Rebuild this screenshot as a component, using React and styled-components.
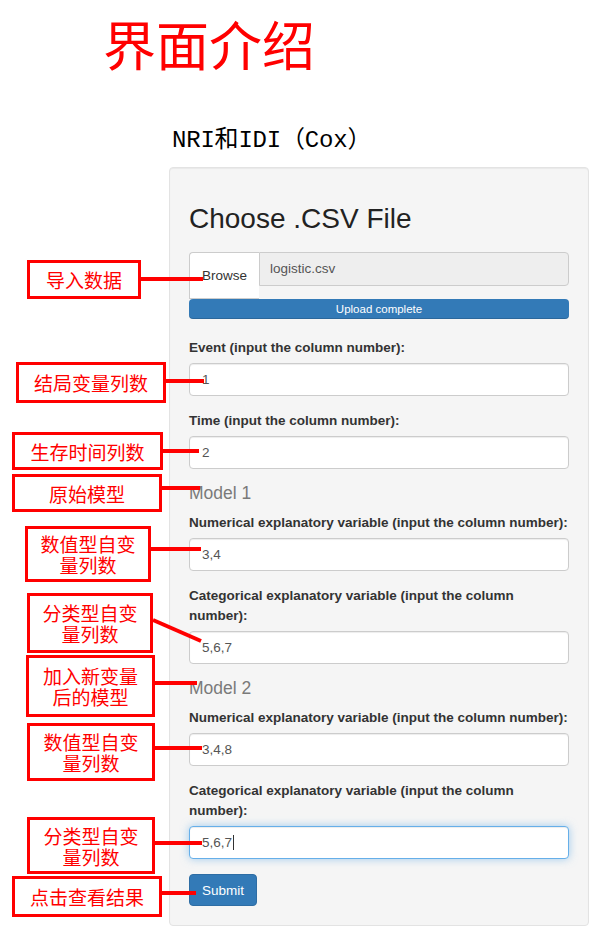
import React from "react";
import styled, { createGlobalStyle } from "styled-components";

// callout boxes on the left, each one points at a part of the form
const callouts = [
  { lines: ["导入数据"], left: 27, top: 260, width: 114, height: 39 },
  { lines: ["结局变量列数"], left: 16, top: 362, width: 150, height: 41 },
  { lines: ["生存时间列数"], left: 12, top: 432, width: 151, height: 38 },
  { lines: ["原始模型"], left: 12, top: 474, width: 150, height: 38 },
  { lines: ["数值型自变", "量列数"], left: 25, top: 526, width: 126, height: 56 },
  { lines: ["分类型自变", "量列数"], left: 27, top: 593, width: 126, height: 60 },
  { lines: ["加入新变量", "后的模型"], left: 26, top: 655, width: 129, height: 62 },
  { lines: ["数值型自变", "量列数"], left: 27, top: 723, width: 128, height: 58 },
  { lines: ["分类型自变", "量列数"], left: 27, top: 817, width: 128, height: 57 },
  { lines: ["点击查看结果"], left: 12, top: 876, width: 150, height: 41 },
];

// leader lines from the boxes to the fields
const leaders = [
  [141, 279, 203, 279],
  [166, 381, 204, 381],
  [163, 451, 199, 451],
  [162, 488, 200, 488],
  [151, 549, 201, 549],
  [153, 620, 201, 641],
  [155, 683, 197, 683],
  [155, 748, 202, 748],
  [155, 843, 202, 843],
  [162, 893, 196, 893],
];

const models = [
  {
    title: "Model 1",
    numerical: "3,4",
    categorical: "5,6,7",
  },
  {
    title: "Model 2",
    numerical: "3,4,8",
    categorical: "5,6,7",
    focused: true,
  },
];

const App = () => {
  return (
    <>
      <GlobalStyle />
      <Page>
        <Title>界面介绍</Title>
        <Main>
          <Header>NRI和IDI（Cox）</Header>
          <Well>
            <PanelTitle>Choose .CSV File</PanelTitle>
            <InputGroup>
              <BrowseButton>Browse</BrowseButton>
              <FileName>logistic.csv</FileName>
            </InputGroup>
            <Progress>Upload complete</Progress>

            <FormGroup>
              <Label>Event (input the column number):</Label>
              <Field>1</Field>
            </FormGroup>
            <FormGroup>
              <Label>Time (input the column number):</Label>
              <Field>2</Field>
            </FormGroup>

            {/* the two models have the same two inputs */}
            {models.map((model) => (
              <React.Fragment key={model.title}>
                <SectionTitle>{model.title}</SectionTitle>
                <FormGroup>
                  <Label>
                    Numerical explanatory variable (input the column number):
                  </Label>
                  <Field>{model.numerical}</Field>
                </FormGroup>
                <FormGroup>
                  <Label>
                    Categorical explanatory variable (input the column number):
                  </Label>
                  <Field $focused={model.focused}>
                    {model.categorical}
                    {model.focused && <Caret />}
                  </Field>
                </FormGroup>
              </React.Fragment>
            ))}

            <SubmitButton>Submit</SubmitButton>
          </Well>
        </Main>

        <Leaders width="600" height="941" viewBox="0 0 600 941">
          {leaders.map(([x1, y1, x2, y2], i) => (
            <line
              key={i}
              x1={x1}
              y1={y1}
              x2={x2}
              y2={y2}
              stroke="#ff0000"
              strokeWidth="4"
            />
          ))}
        </Leaders>
        {callouts.map((c, i) => (
          <Callout
            key={i}
            $left={c.left}
            $top={c.top}
            $width={c.width}
            $height={c.height}
          >
            {c.lines.map((line) => (
              <CalloutLine key={line}>{line}</CalloutLine>
            ))}
          </Callout>
        ))}
      </Page>
    </>
  );
};

const GlobalStyle = createGlobalStyle`
  html, body {
    margin: 0;
    padding: 0;
    background: #fff;
  }
  body {
    font-family: "Liberation Sans", Arial, sans-serif;
  }
`;

const Page = styled.div`
  position: relative;
  width: 600px;
  height: 941px;
  overflow: hidden;
  background: #fff;
`;

const Title = styled.h1`
  margin: 17px 0 0 103px;
  font-family: "Noto Sans CJK SC", sans-serif;
  font-size: 53px;
  line-height: 53px;
  font-weight: 400;
  color: #ff0000;
`;

const Main = styled.div`
  margin-left: 169px;
  width: 420px;
`;

const Header = styled.div`
  margin: 56px 0 11px 3px;
  height: 30px;
  font-family: "Liberation Mono", "Noto Sans CJK SC", monospace;
  font-size: 24px;
  line-height: 30px;
  letter-spacing: -0.2px;
  color: #000;
`;

const Well = styled.div`
  box-sizing: border-box;
  width: 420px;
  padding: 19px;
  background: #f5f5f5;
  border: 1px solid #e3e3e3;
  border-radius: 4px;
  box-shadow: inset 0 1px 1px rgba(0, 0, 0, 0.05);
`;

const PanelTitle = styled.h3`
  margin: 17px 0;
  font-size: 28px;
  line-height: 1.1;
  font-weight: 400;
  color: #222;
`;

const InputGroup = styled.div`
  display: flex;
  align-items: flex-start;
`;

const BrowseButton = styled.div`
  box-sizing: border-box;
  width: 70px;
  height: 47px;
  display: flex;
  align-items: center;
  justify-content: center;
  background: #fff;
  border: 1px solid #ccc;
  border-right: none;
  border-radius: 4px 0 0 0;
  font-size: 13.5px;
  color: #333;
`;

const FileName = styled.div`
  box-sizing: border-box;
  flex: 1;
  height: 34px;
  padding: 6px 10px;
  background: #eee;
  border: 1px solid #ccc;
  border-radius: 0 4px 4px 0;
  font-size: 13.5px;
  line-height: 20px;
  color: #555;
`;

const Progress = styled.div`
  height: 20px;
  margin-bottom: 19px;
  background: #337ab7;
  border-radius: 4px;
  box-shadow: inset 0 -1px 0 rgba(0, 0, 0, 0.15);
  font-size: 11.5px;
  line-height: 20px;
  text-align: center;
  color: #fff;
`;

const FormGroup = styled.div`
  margin-bottom: 15px;
`;

const Label = styled.label`
  display: block;
  margin-bottom: 5px;
  font-size: 13.5px;
  line-height: 20px;
  font-weight: 700;
  color: #333;
`;

const Field = styled.div`
  box-sizing: border-box;
  height: 33px;
  padding: 0 12px;
  display: flex;
  align-items: center;
  background: #fff;
  border: 1px solid ${(p) => (p.$focused ? "#66afe9" : "#ccc")};
  border-radius: 4px;
  box-shadow: ${(p) =>
    p.$focused
      ? "inset 0 1px 1px rgba(0,0,0,.075), 0 0 8px rgba(102,175,233,.6)"
      : "inset 0 1px 1px rgba(0,0,0,.075)"};
  font-size: 13.5px;
  color: #555;
`;

const Caret = styled.span`
  display: inline-block;
  width: 1px;
  height: 15px;
  margin-left: 1px;
  background: #333;
`;

const SectionTitle = styled.h4`
  margin: 10px 0;
  font-size: 17.5px;
  line-height: 1.1;
  font-weight: 400;
  color: #7a7a7a;
`;

const SubmitButton = styled.button`
  box-sizing: border-box;
  height: 32px;
  padding: 0 12px;
  background: #337ab7;
  border: 1px solid #2e6da4;
  border-radius: 4px;
  font-family: "Liberation Sans", Arial, sans-serif;
  font-size: 13.5px;
  color: #fff;
`;

const Leaders = styled.svg`
  position: absolute;
  left: 0;
  top: 0;
  pointer-events: none;
`;

const Callout = styled.div`
  position: absolute;
  left: ${(p) => p.$left}px;
  top: ${(p) => p.$top}px;
  width: ${(p) => p.$width}px;
  height: ${(p) => p.$height}px;
  box-sizing: border-box;
  display: flex;
  flex-direction: column;
  align-items: center;
  justify-content: center;
  background: #fff;
  border: 3px solid #ff0000;
  font-family: "Noto Sans CJK SC", sans-serif;
  font-size: 19px;
  color: #ff0000;
`;

const CalloutLine = styled.div`
  height: 21px;
  line-height: 21px;
  overflow: visible;
`;

export default App;
